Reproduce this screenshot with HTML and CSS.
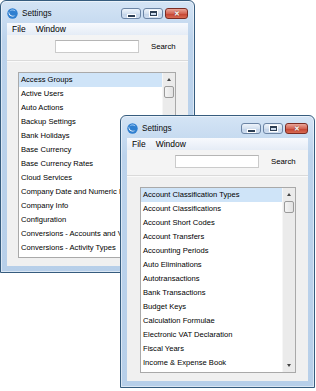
FILE: index.html
```html
<!DOCTYPE html>
<html lang="en">

<head>
    <meta charset="UTF-8" />
    <meta name="viewport" content="width=device-width, initial-scale=1" />
    <title>Settings</title>
    <link rel="stylesheet" href="styles.css">
</head>

<body>
    <div class="desk">

        <!-- janela de trás -->
        <div class="win win-back">
            <div class="titlebar">
                <svg class="app-icon" width="11" height="11" viewBox="0 0 11 11">
                    <circle cx="5.5" cy="5.5" r="5.2" fill="#2f7fd0" />
                    <path d="M2.2 3.2 C1.6 6.4 4.6 8.6 8.6 7.4 C6 9.6 1.8 8.4 1.6 5 C1.6 4.2 1.8 3.6 2.2 3.2 Z" fill="#fff" />
                    <path d="M3.4 2.6 C4.8 1.6 7 1.8 8.2 3" stroke="#bfe0ff" stroke-width="0.8" fill="none" />
                </svg>
                <span class="title">Settings</span>
                <div class="caption">
                    <span class="cbtn cmin"><i></i></span>
                    <span class="cbtn cmax"><i></i></span>
                    <span class="cbtn cclose">&#x2715;</span>
                </div>
            </div>
            <div class="menubar">
                <span>File</span>
                <span>Window</span>
            </div>
            <div class="body">
                <div class="search-row">
                    <div class="search-field"></div>
                    <span class="search-label">Search</span>
                </div>
                <div class="list-area">
                    <div class="listbox">
                        <ul class="items">
                            <li class="sel">Access Groups</li>
                            <li>Active Users</li>
                            <li>Auto Actions</li>
                            <li>Backup Settings</li>
                            <li>Bank Holidays</li>
                            <li>Base Currency</li>
                            <li>Base Currency Rates</li>
                            <li>Cloud Services</li>
                            <li>Company Date and Numeric Formats</li>
                            <li>Company Info</li>
                            <li>Configuration</li>
                            <li>Conversions - Accounts and VAT Codes</li>
                            <li>Conversions - Activity Types</li>
                        </ul>
                        <div class="scroll">
                            <span class="arrow up"></span>
                            <span class="thumb"></span>
                            <span class="arrow down"></span>
                        </div>
                    </div>
                </div>
            </div>
        </div>

        <!-- janela da frente -->
        <div class="win win-front">
            <div class="titlebar">
                <svg class="app-icon" width="11" height="11" viewBox="0 0 11 11">
                    <circle cx="5.5" cy="5.5" r="5.2" fill="#2f7fd0" />
                    <path d="M2.2 3.2 C1.6 6.4 4.6 8.6 8.6 7.4 C6 9.6 1.8 8.4 1.6 5 C1.6 4.2 1.8 3.6 2.2 3.2 Z" fill="#fff" />
                    <path d="M3.4 2.6 C4.8 1.6 7 1.8 8.2 3" stroke="#bfe0ff" stroke-width="0.8" fill="none" />
                </svg>
                <span class="title">Settings</span>
                <div class="caption">
                    <span class="cbtn cmin"><i></i></span>
                    <span class="cbtn cmax"><i></i></span>
                    <span class="cbtn cclose">&#x2715;</span>
                </div>
            </div>
            <div class="menubar">
                <span>File</span>
                <span>Window</span>
            </div>
            <div class="body">
                <div class="search-row">
                    <div class="search-field"></div>
                    <span class="search-label">Search</span>
                </div>
                <div class="list-area">
                    <div class="listbox">
                        <ul class="items">
                            <li class="sel">Account Classification Types</li>
                            <li>Account Classifications</li>
                            <li>Account Short Codes</li>
                            <li>Account Transfers</li>
                            <li>Accounting Periods</li>
                            <li>Auto Eliminations</li>
                            <li>Autotransactions</li>
                            <li>Bank Transactions</li>
                            <li>Budget Keys</li>
                            <li>Calculation Formulae</li>
                            <li>Electronic VAT Declaration</li>
                            <li>Fiscal Years</li>
                            <li>Income &amp; Expense Book</li>
                        </ul>
                        <div class="scroll">
                            <span class="arrow up"></span>
                            <span class="thumb"></span>
                            <span class="arrow down"></span>
                        </div>
                    </div>
                </div>
            </div>
        </div>

    </div>
</body>

</html>
```

FILE: styles.css
```css
* {
    margin: 0;
    padding: 0;
    box-sizing: border-box;
}

body {
    font-family: 'Liberation Sans', Arial, sans-serif;
    background-color: #fff;
    color: #000;
}

.desk {
    position: relative;
    width: 316px;
    height: 391px;
    overflow: hidden;
}

/* janelas */
.win {
    position: absolute;
    width: 195px;
    height: 273px;
    border: 1px solid #365c7e;
    border-radius: 6px 6px 0 0;
    background: linear-gradient(#d4e4f5, #bcd3ec 40px, #b7cfe9);
    padding: 0 6px 6px;
    display: flex;
    flex-direction: column;
    box-shadow: inset 0 0 0 1px rgba(255, 255, 255, 0.5);
}

.win-back {
    left: 0;
    top: 0;
}

.win-front {
    left: 120px;
    top: 115px;
}

.titlebar {
    height: 22px;
    display: flex;
    align-items: center;
    position: relative;
}

.app-icon {
    margin-top: 2px;
}

.title {
    margin-left: 4px;
    margin-top: 2px;
    font-size: 8.2px;
    color: #0c0c0c;
}

.caption {
    position: absolute;
    right: 0;
    top: 7px;
    display: flex;
    gap: 2px;
}

.cbtn {
    height: 11px;
    width: 20px;
    border: 1px solid #6b84a4;
    border-radius: 3px;
    background: linear-gradient(#eef4fb, #d3e0ef 50%, #c2d3e8 51%, #d0def0);
    display: flex;
    align-items: center;
    justify-content: center;
}

.cmin i {
    width: 7px;
    height: 2px;
    margin-top: 4px;
    background: #2d3f55;
    box-shadow: 0 0 0 1px #fff;
}

.cmax i {
    width: 7px;
    height: 5px;
    border: 1px solid #2d3f55;
    border-top-width: 2px;
    box-shadow: 0 0 0 1px #fff;
}

.cclose {
    width: 23px;
    border-color: #7b2b22;
    background: linear-gradient(#eaa699, #d36453 50%, #c2402f 51%, #d86a52);
    color: #fff;
    font-size: 7px;
    font-weight: bold;
    line-height: 1;
    text-shadow: 0 0 1px #5a150e;
}

.menubar {
    height: 12px;
    background: linear-gradient(#f7f9fd, #e5ecf6);
    display: flex;
    align-items: center;
    gap: 10px;
    padding-left: 5px;
    font-size: 8.5px;
}

.body {
    flex: 1;
    background-color: #f0f0f0;
    display: flex;
    flex-direction: column;
}

.search-row {
    height: 26px;
    display: flex;
    align-items: flex-start;
    padding: 5px 0 0 48px;
    gap: 12px;
    background-color: #f4f4f4;
    border-bottom: 1px solid #dadada;
}

.search-field {
    width: 84px;
    height: 13px;
    background: #fff;
    border: 1px solid #cbcbcb;
    border-top-color: #b5b5b5;
}

.search-label {
    font-size: 7.8px;
    line-height: 13px;
}

.list-area {
    flex: 1;
    padding: 10px 0 0 13px;
    border-top: 1px solid #fafafa;
}

.win-back .list-area {
    padding-left: 11px;
}

.listbox {
    width: 156px;
    height: 186px;
    border: 1px solid #a9a9a9;
    background: #fff;
    display: flex;
}

.win-back .listbox {
    width: 158px;
}

.items {
    list-style: none;
    flex: 1;
    overflow: hidden;
}

.items li {
    height: 14px;
    line-height: 14px;
    padding-left: 2px;
    font-size: 7.6px;
    white-space: nowrap;
    overflow: hidden;
}

.items li.sel {
    background-color: #cfe4f8;
}

.scroll {
    width: 13px;
    background: #ebebeb;
    border-left: 1px solid #f6f6f6;
    display: flex;
    flex-direction: column;
    align-items: center;
}

.arrow {
    width: 0;
    height: 0;
    border-left: 2.5px solid transparent;
    border-right: 2.5px solid transparent;
}

.arrow.up {
    margin-top: 5px;
    border-bottom: 3px solid #444;
}

.arrow.down {
    margin-top: auto;
    margin-bottom: 5px;
    border-top: 3px solid #444;
}

.thumb {
    margin-top: 5px;
    width: 10px;
    height: 12px;
    border: 1px solid #9b9b9b;
    border-radius: 2px;
    background: linear-gradient(90deg, #f4f4f4, #e2e2e2);
}
```
